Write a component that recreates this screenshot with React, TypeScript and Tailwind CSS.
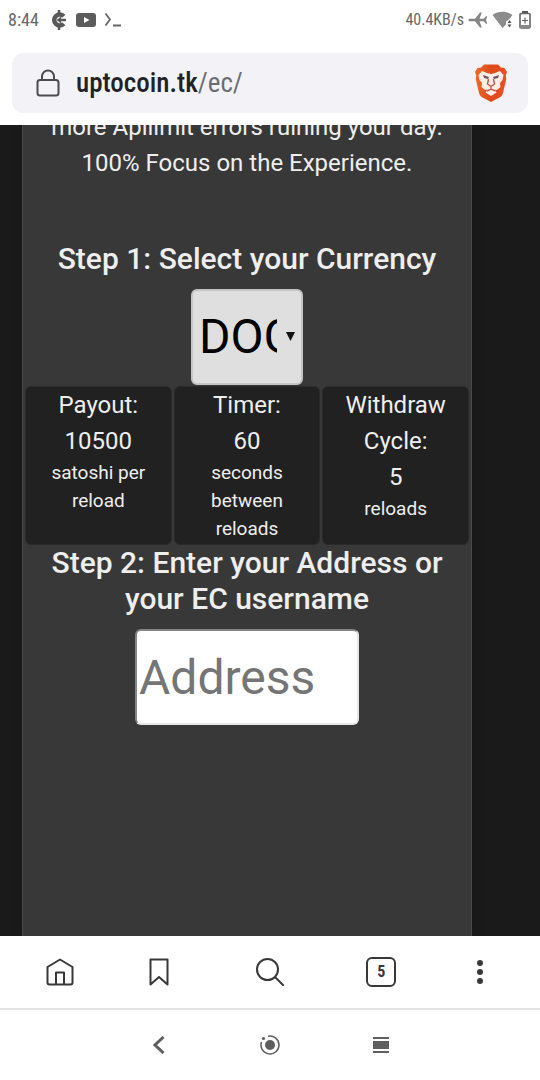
import type { ReactNode } from 'react';

interface StatCardProps {
  lines: string[];
  value: string;
  unit: string;
}

function StatCard({ lines, value, unit }: StatCardProps) {
  return (
    <div className="rounded-md border border-[#2a2a2a] bg-[#212121] px-4 pb-px">
      {lines.map((line) => (
        <p key={line}>{line}</p>
      ))}
      <p>{value}</p>
      <p className="text-[19px] leading-7">{unit}</p>
    </div>
  );
}

interface IconButtonProps {
  label: string;
  children: ReactNode;
}

function IconButton({ label, children }: IconButtonProps) {
  return (
    <button type="button" aria-label={label} className="flex h-10 min-w-7 items-center justify-center">
      {children}
    </button>
  );
}

function BraveLogo() {
  return (
    <svg width="34" height="40" viewBox="0 0 34 40">
      <defs>
        <linearGradient id="brave" x1="0" x2="1" y1="0" y2="0">
          <stop offset="0" stopColor="#ee6a2b" />
          <stop offset="0.5" stopColor="#dc4a1c" />
          <stop offset="1" stopColor="#f04e22" />
        </linearGradient>
      </defs>
      <path
        d="M10 1.500h14l3 3 3.500.5 2.500 4-1.200 3.500.5 3.500-3.300 14c-.6 2-1.500 3.200-3 4.300L17 39l-9-4.700c-1.500-1.100-2.400-2.300-3-4.300L1.700 16l.5-3.500L1 9l2.500-4L7 4.500z"
        fill="url(#brave)"
      />
      <path
        d="M13 10l4 1 4-1 5-2 3.500 4-1 5-2.500 3 .5 4-3.500 3-2-.5 1.500 3L17 33l-5.500-3.500 1.500-3-2 .5-3.500-3 .5-4-2.500-3-1-5L8 8z"
        fill="#fdeee8"
      />
      <path d="M9 12l6 2-1 2-4-1zM25 12l-6 2 1 2 4-1z" fill="#6f5560" />
      <path
        d="M14.500 16l-1 5L17 23.500l3.500-2.500-1-5M17 23.500v3M12.500 28l4.500-1.800 4.500 1.800"
        fill="none"
        stroke="#c25446"
        strokeWidth="1.400"
      />
    </svg>
  );
}

function StatusBar() {
  return (
    <div className="flex h-10 items-center justify-between px-2 font-['Roboto_Condensed','Liberation_Sans_Narrow',sans-serif] text-lg text-[#686868]">
      <div className="flex items-center gap-2">
        <span className="w-[34px]">8:44</span>
        <svg width="18" height="20" viewBox="0 0 18 20">
          <path d="M13.800 6.300A5.500 5.500 0 1 0 13.800 13.700" fill="none" stroke="#595959" strokeWidth="4.500" />
          <path d="M9 0v3M9 17v3" stroke="#595959" strokeWidth="2.500" />
          <path d="M6.500 10l4.500-3.500v2.300h5v2.400h-5v2.300z" fill="#595959" />
        </svg>
        <svg width="20" height="14" viewBox="0 0 20 14">
          <rect width="20" height="14" rx="3" fill="#5c5c5c" />
          <path d="M8 4l5.500 3L8 10z" fill="#fff" />
        </svg>
        <svg width="18" height="16" viewBox="0 0 18 16" fill="none" stroke="#666" strokeWidth="1.800">
          <path d="M1.500 1.500L6 7.500l-4.500 6M9 13.500h8" />
        </svg>
      </div>
      <div className="flex items-center gap-1">
        <span className="text-base">40.4KB/s</span>
        <svg width="20" height="18" viewBox="0 0 20 18" fill="#858585">
          <path d="M0 9l1.500-1.300H7L12 1.500h1.800L11.500 7.700h4l2.500-2.500h1.300L18 9l1.300 3.800H18l-2.500-2.500h-4l2.300 6.200H12L7 10.300H1.500z" />
        </svg>
        <svg width="22" height="18" viewBox="0 0 22 18">
          <path d="M.5 4C6-.3 15-.3 20.500 4L17 8.500l-3 2v3L10.500 17z" fill="#8c8c8c" />
          <path d="M15.500 12l2-3 2 3zM15.500 13.500l2 3 2-3z" fill="#555" />
        </svg>
        <svg width="14" height="18" viewBox="0 0 14 18">
          <path d="M4 0h6v2.500H4z" fill="#555" />
          <rect x="2" y="2.500" width="10" height="14.500" rx="1" fill="#fff" stroke="#666" strokeWidth="1.600" />
          <path d="M7 6.500v6M4 9.500h6" stroke="#666" strokeWidth="1.200" />
          <path d="M2 14h10v3H2z" fill="#888" />
        </svg>
      </div>
    </div>
  );
}

export default function App() {
  return (
    <div className="flex min-h-screen flex-col bg-white font-[Roboto,sans-serif]">
      <header>
        <StatusBar />
        {/* Address bar */}
        <div className="mx-3 mt-[13px] mb-3 flex h-15 items-center rounded-xl bg-[#f3f3f7] pr-5 pl-6">
          <svg width="24" height="28" viewBox="0 0 24 28" fill="none" stroke="#4c4b50" strokeWidth="2">
            <rect x="1.500" y="11" width="21" height="15.500" rx="2.500" />
            <path d="M6 11V7.500a6 6 0 0 1 12 0V11" />
          </svg>
          <p className="ml-4 flex-1 font-['Roboto_Condensed','Liberation_Sans_Narrow',sans-serif] text-[27px] leading-10 text-[#6c6b72]">
            <span className="font-medium text-[#222226]">uptocoin.tk</span>/ec/
          </p>
          <button type="button" aria-label="Brave Shields">
            <BraveLogo />
          </button>
        </div>
      </header>

      {/* Page content, scrolled part way down */}
      <main className="flex flex-1 overflow-hidden bg-[#1a1a1a] pr-[68px] pl-[22px]">
        <div className="-mt-4 flex-1 border-x border-[#4a4a4a] bg-[#383838] px-[2px] text-center text-2xl leading-9 text-[#eeeeee] shadow-lg">
          <p>
            more Apilimit errors ruining your day.
            <br />
            100% Focus on the Experience.
          </p>

          <h4 className="mt-15 mb-3 text-[30px] leading-9 font-medium">
            <label htmlFor="currency">Step 1: Select your Currency</label>
          </h4>
          <div className="relative mx-auto h-24 w-28">
            <select
              id="currency"
              className="h-24 w-28 appearance-none rounded-md border-2 border-[#c4c4c4] bg-[#dfdfdf] pr-6 pl-[6px] text-5xl text-black"
            >
              <option>DOGE</option>
            </select>
            <svg
              width="9"
              height="9"
              viewBox="0 0 9 9"
              className="pointer-events-none absolute top-[43px] right-2"
            >
              <path d="M0 0h9L4.500 9z" fill="#111" />
            </svg>
          </div>

          <div className="mt-px grid grid-cols-3 gap-[2px]">
            <StatCard lines={['Payout:']} value="10500" unit="satoshi per reload" />
            <StatCard lines={['Timer:']} value="60" unit="seconds between reloads" />
            <StatCard lines={['Withdraw', 'Cycle:']} value="5" unit="reloads" />
          </div>

          <h4 className="mb-3 text-[30px] leading-9 font-medium">
            <label htmlFor="address">Step 2: Enter your Address or your EC username</label>
          </h4>
          <input
            id="address"
            type="text"
            placeholder="Address"
            className="mx-auto block h-24 w-56 rounded-md border-2 border-t-[#858585] border-r-[#e6e6e6] border-b-[#e6e6e6] border-l-[#858585] bg-white px-[2px] text-5xl text-black placeholder:text-[#757575]"
          />
        </div>
      </main>

      {/* Browser toolbar */}
      <nav className="grid h-18 grid-cols-[87fr_111fr_111fr_111fr_87fr] items-center px-4 text-[#38383b]">
        <IconButton label="Home">
          <svg width="28" height="28" viewBox="0 0 28 28" fill="none" stroke="currentColor" strokeWidth="2" strokeLinejoin="round">
            <path d="M1.500 9L14 1.500 26.500 9v15.500q0 2-2 2h-21q-2 0-2-2z" />
            <path d="M10 26V14.500h8V26" />
          </svg>
        </IconButton>
        <IconButton label="Bookmarks">
          <svg width="20" height="28" viewBox="0 0 20 28" fill="none" stroke="currentColor" strokeWidth="2" strokeLinejoin="round">
            <path d="M1.500 1.500h17v25L10 19l-8.500 7.500z" />
          </svg>
        </IconButton>
        <IconButton label="Search">
          <svg width="28" height="28" viewBox="0 0 28 28" fill="none" stroke="currentColor" strokeWidth="2" strokeLinecap="round">
            <circle cx="11.500" cy="11.500" r="10.500" />
            <path d="M19 19l8 8" />
          </svg>
        </IconButton>
        <IconButton label="Tabs">
          <span className="flex size-[30px] items-center justify-center rounded-md border-2 border-[#38383b] font-['Roboto_Condensed','Liberation_Sans_Narrow',sans-serif] text-base leading-4 font-bold">
            5
          </span>
        </IconButton>
        <IconButton label="Menu">
          <svg width="6" height="24" viewBox="0 0 6 24" fill="currentColor">
            <circle cx="3" cy="3" r="3" />
            <circle cx="3" cy="12" r="3" />
            <circle cx="3" cy="21" r="3" />
          </svg>
        </IconButton>
      </nav>

      {/* System navigation */}
      <nav className="flex h-18 items-center justify-center gap-[83px] border-t-2 border-[#e2e2e2] text-[#5f5f5f]">
        <IconButton label="Back">
          <svg width="12" height="18" viewBox="0 0 12 18" fill="none" stroke="currentColor" strokeWidth="3">
            <path d="M10.500 1L2 9l8.500 8" />
          </svg>
        </IconButton>
        <IconButton label="System home">
          <svg width="20" height="20" viewBox="0 0 20 20">
            <circle cx="10" cy="10" r="5" fill="currentColor" />
            <path d="M8 1.200A9 9 0 1 1 1.500 7" fill="none" stroke="currentColor" strokeWidth="1.500" />
            <circle cx="3.500" cy="3.500" r="1.600" fill="currentColor" />
          </svg>
        </IconButton>
        <IconButton label="Recent apps">
          <svg width="16" height="16" viewBox="0 0 16 16" fill="currentColor">
            <path d="M0 0h16v2H0zM0 4h16v8H0zM0 14h16v2H0z" />
          </svg>
        </IconButton>
      </nav>
    </div>
  );
}
